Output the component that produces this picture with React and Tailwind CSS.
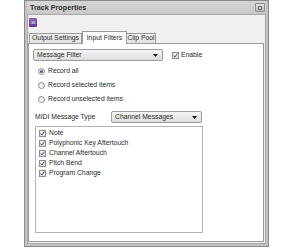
import React from "react";

const font = { fontFamily: '"Liberation Sans", Arial, sans-serif' };

const Check = () => (
	<span className="w-[7px] h-[7px] border border-[#8e8f8f] bg-gradient-to-b from-[#f4f4f4] to-[#dcdcdc] flex items-center justify-center shrink-0">
		<svg width="5" height="5" viewBox="0 0 5 5">
			<path d="M0.6 2.6 L1.9 4 L4.4 0.6" fill="none" stroke="#2b4f9e" strokeWidth="1" />
		</svg>
	</span>
);

const Radio = ({ on }) => (
	<span className="w-[7px] h-[7px] rounded-full border border-[#8c8c8c] bg-gradient-to-b from-[#e6e6e6] to-[#fafafa] flex items-center justify-center shrink-0">
		{on && <span className="w-[3px] h-[3px] rounded-full bg-[#2d5fb5]" />}
	</span>
);

const Select = ({ label, className }) => (
	<div
		className={`h-[12px] border border-[#9c9c9c] rounded-[2px] bg-gradient-to-b from-[#f6f6f6] to-[#dedede] flex items-center justify-between pl-[3px] pr-[4px] ${className}`}
	>
		<span className="leading-none">{label}</span>
		<svg width="5" height="3" viewBox="0 0 5 3">
			<path d="M0 0 H5 L2.5 3 Z" fill="#111" />
		</svg>
	</div>
);

const filters = [
	"Note",
	"Polyphonic Key Aftertouch",
	"Channel Aftertouch",
	"Pitch Bend",
	"Program Change",
];

const radios = [
	{ label: "Record all", on: true },
	{ label: "Record selected items" },
	{ label: "Record unselected items" },
];

export default function App() {
	return (
		<div className="w-[289px] h-[248px] bg-white pl-[24px] text-[6.8px] text-[#2a2a2a]" style={font}>
			<div className="w-[245px] h-[247px] border border-[#8a8a8a] bg-[#c2c2c2] flex flex-col px-[2px] pb-[2px]">
				{/* Title bar */}
				<div className="h-[13px] flex items-center justify-between pl-[3px] pr-[1px] bg-gradient-to-b from-[#d6d6d6] to-[#c8c8c8] shrink-0">
					<span className="text-[7.2px] font-bold leading-none text-[#333]">Track Properties</span>
					<div className="w-[10px] h-[9px] rounded-[1px] border border-[#8d8d8d] bg-gradient-to-b from-[#e2e2e2] to-[#bdbdbd] flex items-center justify-center">
						<span className="w-[4px] h-[4px] border border-[#6d6d6d] bg-[#d4d4d4]" />
					</div>
				</div>

				{/* Body */}
				<div className="flex-1 flex flex-col bg-[#f0f0f0] border border-[#a9a9a9]">
					<div className="h-[15px] pt-[3px] pl-[1px] shrink-0">
						<div className="w-[8px] h-[9px] rounded-[1px] bg-gradient-to-b from-[#8a67b8] to-[#5e3f8e] flex items-center justify-center">
							<span className="text-[4px] leading-none text-[#e8dcf8] font-bold">36</span>
						</div>
					</div>

					{/* Tabs */}
					<div className="h-[13px] flex items-end pl-[1px] shrink-0 relative z-10">
						<div className="h-[10px] w-[53px] border border-b-0 border-[#9a9a9a] bg-gradient-to-b from-[#f2f2f2] to-[#e2e2e2] flex items-center justify-center">
							Output Settings
						</div>
						<div className="h-[13px] w-[45px] -mb-px border border-b-0 border-[#9a9a9a] bg-white flex items-center justify-center">
							Input Filters
						</div>
						<div className="h-[10px] w-[29px] border border-b-0 border-l-0 border-[#9a9a9a] bg-gradient-to-b from-[#f2f2f2] to-[#e2e2e2] flex items-center justify-center">
							Clip Pool
						</div>
					</div>

					{/* Panel */}
					<div className="flex-1 bg-white border border-[#9a9a9a] mr-[1px] mb-[1px] flex flex-col pl-[4px]">
						<div className="mt-[5px] flex items-center">
							<Select label="Message Filter" className="w-[130px]" />
							<div className="ml-[9px] flex items-center gap-[2px]">
								<Check />
								<span className="leading-none">Enable</span>
							</div>
						</div>

						<div className="mt-[3px] flex flex-col pl-[5px]">
							{radios.map((r) => (
								<div key={r.label} className="h-[14px] flex items-center gap-[3px]">
									<Radio on={r.on} />
									<span className="leading-none">{r.label}</span>
								</div>
							))}
						</div>

						<div className="mt-[5px] flex items-center">
							<span className="w-[78px] pl-[2px] leading-none">MIDI Message Type</span>
							<Select label="Channel Messages" className="w-[91px]" />
						</div>

						<div className="mt-[3px] ml-[2px] w-[168px] h-[107px] border border-[#b4b4b4] flex flex-col pt-[1px] pl-[3px]">
							{filters.map((f) => (
								<div key={f} className="h-[10px] flex items-center gap-[3px]">
									<Check />
									<span className="leading-none">{f}</span>
								</div>
							))}
						</div>
					</div>
				</div>
			</div>
		</div>
	);
}
